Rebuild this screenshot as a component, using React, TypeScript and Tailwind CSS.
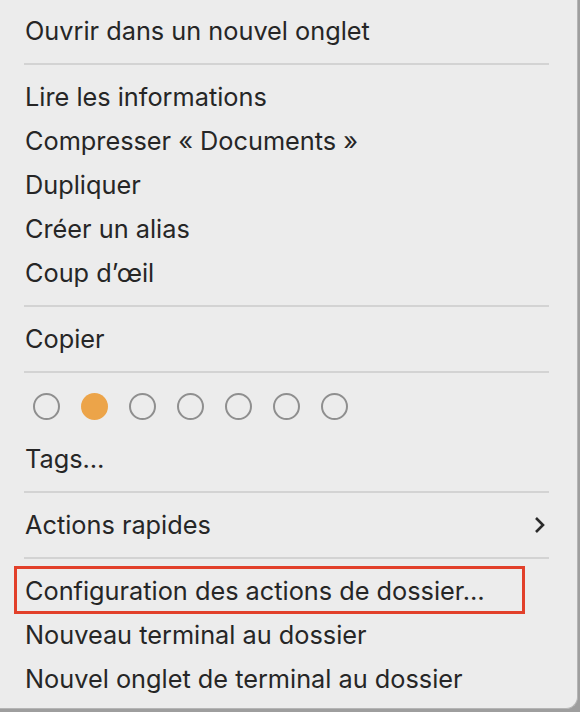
import React from "react";

const FONT = { fontFamily: "Inter, 'Noto Sans', sans-serif" };

function Item({ label, children }: { label: string; children?: React.ReactNode }) {
  return (
    <div className="relative flex h-[44px] items-center justify-between pl-[25px] pr-[31px] text-[25.3px] leading-none text-[#262626]">
      <span>{label}</span>
      {children}
    </div>
  );
}

function Sep() {
  return (
    <div className="flex h-[22px] items-center pl-[24px] pr-[28px]">
      <div className="h-[2px] w-full bg-[#d3d3d3]" />
    </div>
  );
}

const TAGS = ["", "#eca449", "", "", "", "", ""];

export default function App() {
  return (
    <div className="h-[712px] w-[580px] overflow-hidden bg-[#9e9e9e]" style={FONT}>
      <div className="h-[709px] w-[578px] rounded-br-[12px] border-r border-b border-[#b5b5b5] bg-[#ececec] pt-[9px]">
        <Item label="Ouvrir dans un nouvel onglet" />
        <Sep />
        <Item label="Lire les informations" />
        <Item label="Compresser « Documents »" />
        <Item label="Dupliquer" />
        <Item label="Créer un alias" />
        <Item label="Coup d’œil" />
        <Sep />
        <Item label="Copier" />
        <Sep />
        <div className="flex h-[54px] items-start gap-[21px] pl-[33px] pt-[10px]">
          {TAGS.map((c, i) =>
            c ? (
              <div key={i} className="h-[27px] w-[27px] rounded-full bg-[#eca449]" />
            ) : (
              <div key={i} className="h-[27px] w-[27px] rounded-full border-2 border-[#8f8f8f]" />
            )
          )}
        </div>
        <Item label="Tags…" />
        <Sep />
        <Item label="Actions rapides">
          <svg width="13" height="18" viewBox="0 0 13 18">
            <polyline points="3,2 10,9 3,16" fill="none" stroke="#2a2a2a" strokeWidth="2.6" />
          </svg>
        </Item>
        <Sep />
        <Item label="Configuration des actions de dossier…">
          <div className="absolute left-[14px] top-[-3px] h-[48px] w-[511px] border-[3px] border-[#e2402a]" />
        </Item>
        <Item label="Nouveau terminal au dossier" />
        <Item label="Nouvel onglet de terminal au dossier" />
      </div>
    </div>
  );
}
